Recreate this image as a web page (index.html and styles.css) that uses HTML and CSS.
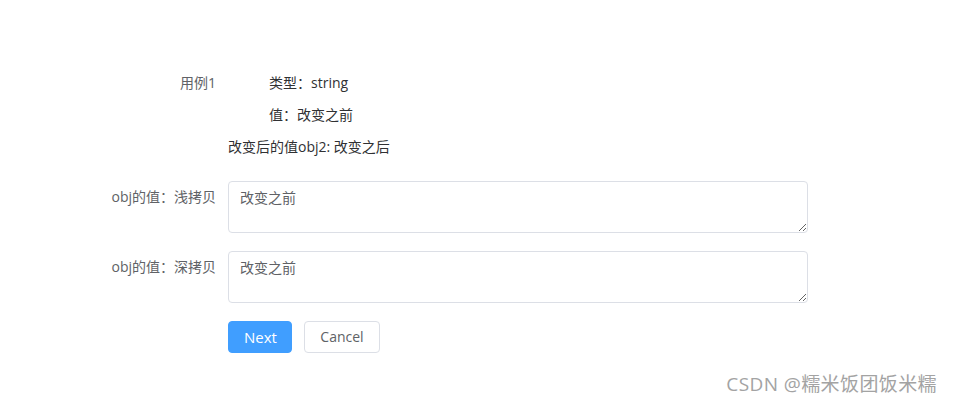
FILE: index.html
```html
<!DOCTYPE html>
<html lang="zh">
<head>
<meta charset="utf-8">
<link rel="stylesheet" href="styles.css">
</head>
<body>
<div class="page">
  <form class="form">
    <div class="item">
      <label class="label">用例1</label>
      <div class="content">
        <div class="line indent">类型：string</div>
        <div class="line indent">值：改变之前</div>
        <div class="line dark">改变后的值obj2: 改变之后</div>
      </div>
    </div>
    <div class="item">
      <label class="label">obj的值：浅拷贝</label>
      <div class="content">
        <textarea class="textarea" rows="2">改变之前</textarea>
      </div>
    </div>
    <div class="item">
      <label class="label">obj的值：深拷贝</label>
      <div class="content">
        <textarea class="textarea" rows="2">改变之前</textarea>
      </div>
    </div>
    <div class="item">
      <div class="label"></div>
      <div class="content buttons">
        <button type="button" class="btn primary">Next</button>
        <button type="button" class="btn">Cancel</button>
      </div>
    </div>
  </form>
  <div class="watermark">CSDN @糯米饭团饭米糯</div>
</div>
</body>
</html>
```
FILE: styles.css
```css
html, body {
  margin: 0;
  padding: 0;
  background: #fff;
}
body {
  font-family: "Open Sans", "Noto Sans CJK SC", sans-serif;
  font-size: 14px;
  color: #606266;
}
.page {
  position: relative;
  width: 954px;
  height: 403px;
  box-sizing: border-box;
  padding-top: 67px;
}
.form {
  margin: 0;
}
.item {
  display: flex;
  margin-bottom: 18px;
}
.label {
  width: 120px;
  margin-left: 108px;
  box-sizing: border-box;
  padding-right: 12px;
  text-align: right;
  line-height: 32px;
  color: #606266;
  flex: none;
}
.content {
  width: 580px;
  line-height: 32px;
  color: #303133;
}
.line.indent {
  padding-left: 41px;
}
.textarea {
  display: block;
  width: 580px;
  height: 52px;
  box-sizing: border-box;
  border: 1px solid #dcdfe6;
  border-radius: 4px;
  padding: 5px 11px;
  font-family: inherit;
  font-size: 14px;
  line-height: 21px;
  color: #606266;
  resize: vertical;
  margin: 0;
  outline: none;
}
.buttons {
  display: flex;
  gap: 12px;
}
.btn {
  height: 32px;
  box-sizing: border-box;
  border: 1px solid #dcdfe6;
  border-radius: 4px;
  background: #fff;
  color: #606266;
  font-family: inherit;
  font-size: 14px;
  padding: 0 15px;
  margin: 0;
  line-height: 30px;
}
.btn.primary {
  background: #409eff;
  border-color: #409eff;
  color: #fff;
  width: 64px;
  font-size: 15px;
}
.btn:not(.primary) {
  width: 76px;
}
.watermark {
  position: absolute;
  right: 17px;
  top: 371px;
  font-size: 19px;
  line-height: 26px;
  color: #a3a3a3;
  text-shadow: 0 0 1px #fff;
  letter-spacing: 0.4px;
}
```
